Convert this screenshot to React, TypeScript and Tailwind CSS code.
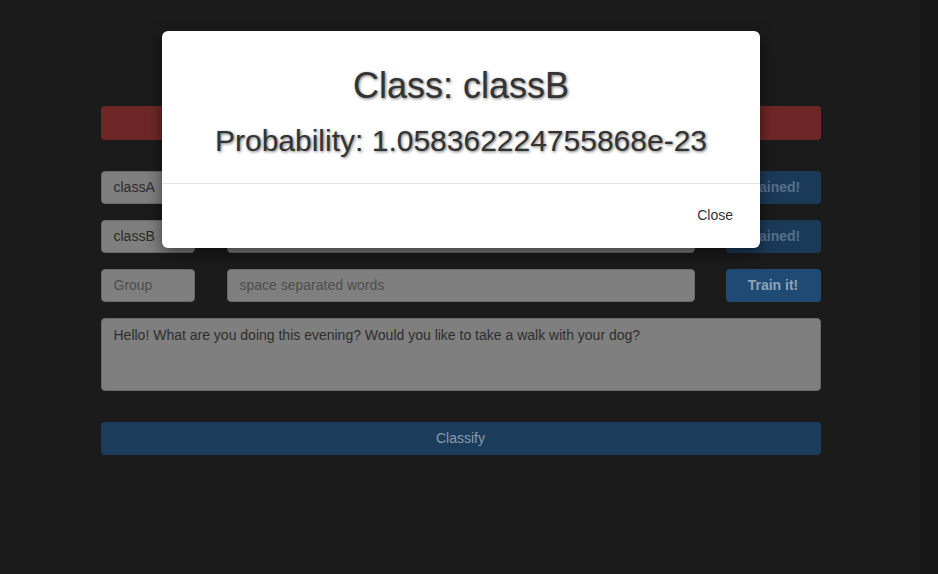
import React from 'react';

const App: React.FC = () => {
  return (
    <div className="relative w-[938px] h-[574px] overflow-hidden bg-[#1b1b1b] font-['Liberation_Sans',Arial,sans-serif] text-[14px]">
      <div className="flex h-full">
        <div className="w-[921px] h-full">
          <div className="w-[720px] mx-auto pt-[106px]">
            <div className="h-[34px] rounded bg-[#6e2727]"></div>

            <div className="mt-[31px] flex flex-col gap-[16px]">
              <div className="flex items-center h-[33px]">
                <div className="w-[94px] h-full rounded bg-[#7f7f7f] border border-[#6a6a6a] px-3 flex items-center text-[#2b2b2b]">classA</div>
                <div className="ml-[32px] w-[468px] h-full rounded bg-[#7f7f7f] border border-[#6a6a6a]"></div>
                <div className="ml-[31px] w-[95px] h-full rounded bg-[#1b3a58] flex items-center justify-center text-[#56708a] font-bold">Trained!</div>
              </div>
              <div className="flex items-center h-[33px]">
                <div className="w-[94px] h-full rounded bg-[#7f7f7f] border border-[#6a6a6a] px-3 flex items-center text-[#2b2b2b]">classB</div>
                <div className="ml-[32px] w-[468px] h-full rounded bg-[#7f7f7f] border border-[#6a6a6a]"></div>
                <div className="ml-[31px] w-[95px] h-full rounded bg-[#1b3a58] flex items-center justify-center text-[#56708a] font-bold">Trained!</div>
              </div>
              <div className="flex items-center h-[33px]">
                <div className="w-[94px] h-full rounded bg-[#7f7f7f] border border-[#6a6a6a] px-3 flex items-center text-[#4d4d4d]">Group</div>
                <div className="ml-[32px] w-[468px] h-full rounded bg-[#7f7f7f] border border-[#6a6a6a] px-3 flex items-center text-[#4d4d4d]">space separated words</div>
                <div className="ml-[31px] w-[95px] h-full rounded bg-[#1e4a74] flex items-center justify-center text-[#8ea3b8] font-bold">Train it!</div>
              </div>
            </div>

            <div className="mt-[16px] h-[73px] rounded bg-[#7f7f7f] border border-[#6a6a6a] px-3 pt-[6px] text-[#2e2e2e]">
              Hello! What are you doing this evening? Would you like to take a walk with your dog?
            </div>

            <div className="mt-[31px] h-[33px] rounded bg-[#1c3c5b] flex items-center justify-center text-[#8a9aab]">Classify</div>
          </div>
        </div>
        <div className="w-[17px] h-full bg-[#171717]"></div>
      </div>

      <div className="absolute left-[162px] top-[31px] w-[598px] rounded-md bg-white shadow-[0_5px_15px_rgba(0,0,0,0.5)]">
        <div className="p-[15px] text-center text-[#333] [text-shadow:1px_1px_3px_rgba(0,0,0,0.55)]">
          <h1 className="mt-[20px] mb-[18px] text-[36px] leading-[1.1]">Class: classB</h1>
          <h2 className="mb-[11px] text-[30px] leading-[1.1]">Probability: 1.058362224755868e-23</h2>
        </div>
        <div className="border-t border-[#e5e5e5] p-[15px] flex justify-end">
          <button className="h-[34px] px-3 text-[#333] text-[14px]">Close</button>
        </div>
      </div>
    </div>
  );
};

export default App;
